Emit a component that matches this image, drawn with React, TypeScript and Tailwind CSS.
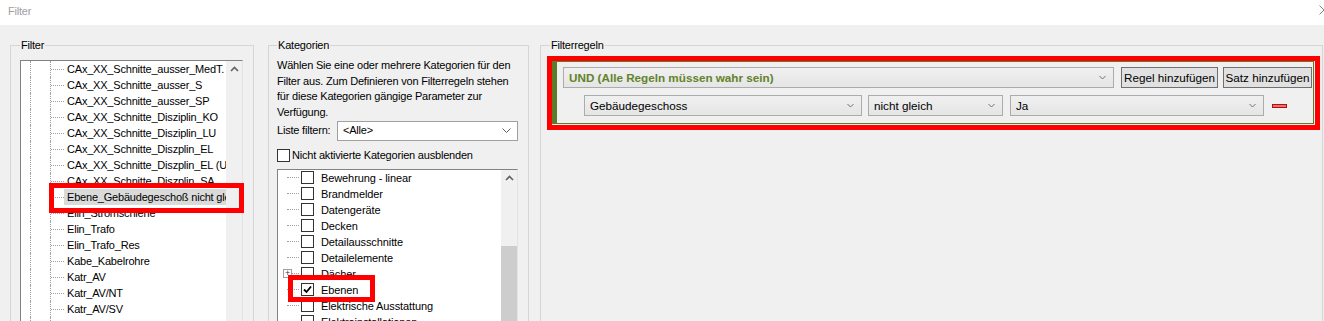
import React from 'react';

const leftItems = [
  'CAx_XX_Schnitte_ausser_MedT.',
  'CAx_XX_Schnitte_ausser_S',
  'CAx_XX_Schnitte_ausser_SP',
  'CAx_XX_Schnitte_Disziplin_KO',
  'CAx_XX_Schnitte_Disziplin_LU',
  'CAx_XX_Schnitte_Diszplin_EL',
  'CAx_XX_Schnitte_Diszplin_EL (U',
  'CAx_XX_Schnitte_Diszplin_SA',
  'Ebene_Gebäudegeschoß nicht gleich',
  'Elin_Stromschiene',
  'Elin_Trafo',
  'Elin_Trafo_Res',
  'Kabe_Kabelrohre',
  'Katr_AV',
  'Katr_AV/NT',
  'Katr_AV/SV',
  'Katr_Brandmeldeanlage',
];

const categories = [
  { name: 'Bewehrung - linear' },
  { name: 'Brandmelder' },
  { name: 'Datengeräte' },
  { name: 'Decken' },
  { name: 'Detailausschnitte' },
  { name: 'Detailelemente' },
  { name: 'Dächer', expandable: true },
  { name: 'Ebenen', checked: true },
  { name: 'Elektrische Ausstattung' },
  { name: 'Elektroinstallationen' },
];

const UpArrow = () => (
  <svg width="9" height="6" viewBox="0 0 9 6" className="mx-auto mt-[5px]">
    <polyline points="1,5 4.5,1.5 8,5" fill="none" stroke="#606060" strokeWidth="1.6" />
  </svg>
);

const SmallChevron = () => (
  <svg width="7" height="5" viewBox="0 0 7 5" className="shrink-0">
    <polyline points="0.5,1 3.5,4 6.5,1" fill="none" stroke="#707070" strokeWidth="1" />
  </svg>
);

const Checkbox = ({ checked }: { checked?: boolean }) => (
  <div className="flex h-[13px] w-[13px] shrink-0 items-center justify-center border border-[#333333] bg-white">
    {checked && (
      <svg width="9" height="9" viewBox="0 0 9 9">
        <polyline points="1,4.5 3.5,7 8,1.5" fill="none" stroke="#000" strokeWidth="1.8" />
      </svg>
    )}
  </div>
);

const TreeRow = ({ label, selected }: { label: string; selected?: boolean }) => (
  <div className="flex h-[16px] pl-[9px]">
    <div className="w-[20px] shrink-0 border-l border-dotted border-[#a0a0a0]" />
    <div className="flex w-[14px] shrink-0 items-center border-l border-dotted border-[#a0a0a0]">
      <div className="w-[13px] border-t border-dotted border-[#a0a0a0]" />
    </div>
    <span
      className={`min-w-0 flex-1 overflow-hidden whitespace-nowrap pl-[3px] leading-[16px] ${selected ? 'bg-[#dadada]' : ''}`}
    >
      {label}
    </span>
  </div>
);

const WpfSelect = ({ text, className, bold }: { text: string; className: string; bold?: boolean }) => (
  <div
    className={`flex h-[21px] shrink-0 items-center justify-between border border-[#acacac] bg-gradient-to-b from-[#f0f0f0] to-[#e5e5e5] pl-[5px] pr-[7px] ${className}`}
  >
    <span className={bold ? 'font-bold text-[#62832a]' : 'text-black'}>{text}</span>
    <SmallChevron />
  </div>
);

const WpfButton = ({ text, className }: { text: string; className: string }) => (
  <button
    className={`flex h-[21px] shrink-0 items-center justify-center whitespace-nowrap border border-[#707070] bg-[#e1e1e1] text-black ${className}`}
  >
    {text}
  </button>
);

export default function App() {
  return (
    <div className="h-[321px] w-[1324px] overflow-hidden bg-[#f0f0f0] font-['Liberation_Sans',Arial,sans-serif] text-[11px] tracking-[-0.2px] text-black">
      {/* title bar */}
      <div className="flex h-[25px] items-start justify-between bg-white pl-[8px] pt-[3px]">
        <span className="leading-[16px] text-[#a0a0a0]">Filter</span>
        <svg width="10" height="10" viewBox="0 0 10 10" className="mr-[-5px] mt-[2px]">
          <path d="M0.5 0.5 L9.5 9.5 M9.5 0.5 L0.5 9.5" stroke="#808080" strokeWidth="1" />
        </svg>
      </div>

      <div className="flex items-start pt-[12px]">
        {/* Filter group */}
        <fieldset className="ml-[10px] h-[320px] w-[244px] min-w-0 shrink-0 border border-[#d5d5d5] pl-[9px] pr-[10px]">
          <legend className="px-[1px] leading-[16px]">Filter</legend>
          <div className="relative mt-[7px] flex h-[270px] border border-b-[#e3e3e3] border-l-[#828282] border-r-[#e3e3e3] border-t-[#828282] bg-white">
            <div className="min-w-0 flex-1 overflow-hidden">
              {leftItems.map((item, i) => (
                <TreeRow key={item} label={item} selected={i === 8} />
              ))}
            </div>
            <div className="w-[16px] shrink-0 bg-[#f0f0f0]">
              <UpArrow />
            </div>
            <div className="absolute left-[28px] top-[122px] h-[30px] w-[195px] border-[5px] border-[#ff0000]" />
          </div>
        </fieldset>

        {/* Kategorien group */}
        <fieldset className="ml-[14px] h-[320px] w-[261px] min-w-0 shrink-0 border border-[#d5d5d5] pl-[8px] pr-[10px]">
          <legend className="px-[1px] leading-[16px]">Kategorien</legend>
          <p className="mt-[5px] leading-[15.67px]">
            Wählen Sie eine oder mehrere Kategorien für den Filter aus. Zum Definieren von Filterregeln stehen für
            diese Kategorien gängige Parameter zur Verfügung.
          </p>
          <div className="flex h-[20px] items-center">
            <span className="w-[60px] shrink-0 whitespace-nowrap">Liste filtern:</span>
            <div className="flex h-[20px] flex-1 items-center justify-between border border-[#a0a0a0] bg-white pl-[5px] pr-[6px]">
              <span>&lt;Alle&gt;</span>
              <svg width="9" height="5" viewBox="0 0 9 5">
                <polyline points="0.5,0.5 4.5,4.5 8.5,0.5" fill="none" stroke="#606060" strokeWidth="1" />
              </svg>
            </div>
          </div>
          <label className="mt-[7px] flex h-[16px] items-center gap-[2px]">
            <Checkbox />
            <span className="whitespace-nowrap">Nicht aktivierte Kategorien ausblenden</span>
          </label>
          <div className="relative mt-[5px] flex h-[160px] border border-b-[#e3e3e3] border-l-[#828282] border-r-[#e3e3e3] border-t-[#828282] bg-white">
            <div className="min-w-0 flex-1 overflow-hidden tracking-[-0.1px]">
              {categories.map((c) => (
                <div key={c.name} className="flex h-[16px] items-center pl-[9px]">
                  <div className="relative flex w-[14px] shrink-0 items-center">
                    <div className="w-[12px] border-t border-dotted border-[#a0a0a0]" />
                    {c.expandable && (
                      <div className="absolute left-[-4px] flex h-[9px] w-[9px] items-center justify-center border border-[#a0a0a0] bg-white text-[9px] leading-none text-[#404040]">
                        +
                      </div>
                    )}
                  </div>
                  <Checkbox checked={c.checked} />
                  <span className="ml-[7px] whitespace-nowrap leading-[16px]">{c.name}</span>
                </div>
              ))}
            </div>
            <div className="flex w-[16px] shrink-0 flex-col bg-[#f0f0f0]">
              <div className="h-[76px]">
                <UpArrow />
              </div>
              <div className="flex-1 bg-[#cdcdcd]" />
            </div>
            <div className="absolute left-[10px] top-[105px] h-[27px] w-[87px] border-[5px] border-[#ff0000]" />
          </div>
        </fieldset>

        {/* Filterregeln group */}
        <fieldset className="ml-[11px] h-[320px] w-[783px] min-w-0 shrink-0 border border-[#d5d5d5] pl-[6px]">
          <legend className="ml-[3px] px-[1px] leading-[16px]">Filterregeln</legend>
          <div className="mt-[3px] w-[773px] border-[5px] border-[#ff0000]">
            <div className="mb-[1px] mr-[1px] border border-l-[5px] border-[#5b7b2e] pb-[7px] pl-[6px] pr-[1px] pt-[5px] text-[11.7px] tracking-normal">
              <div className="flex h-[21px] items-center">
                <WpfSelect text="UND (Alle Regeln müssen wahr sein)" className="w-[551px]" bold />
                <WpfButton text="Regel hinzufügen" className="ml-[7px] w-[97px]" />
                <WpfButton text="Satz hinzufügen" className="ml-[5px] w-[89px]" />
              </div>
              <div className="mt-[7px] flex h-[21px] items-center pl-[21px]">
                <WpfSelect text="Gebäudegeschoss" className="w-[278px]" />
                <WpfSelect text="nicht gleich" className="ml-[6px] w-[135px]" />
                <WpfSelect text="Ja" className="ml-[7px] w-[254px]" />
                <div className="ml-[8px] h-[4px] w-[15px] border border-[#b01010] bg-[#f07070]" />
              </div>
            </div>
          </div>
        </fieldset>
      </div>
    </div>
  );
}
